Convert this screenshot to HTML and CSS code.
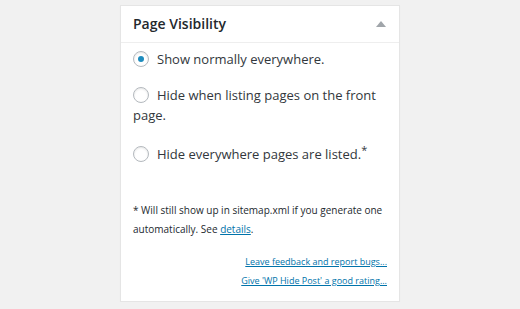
FILE: index.html
```html
<!DOCTYPE html>
<html>
<head>
<meta charset="utf-8">
<link rel="stylesheet" href="styles.css">
</head>
<body>
<div class="box">
  <div class="box-header">
    <h2 class="box-title">Page Visibility</h2>
    <span class="toggle"></span>
  </div>
  <div class="box-body">
    <label class="option option-first"><span class="radio checked"></span><span>Show normally everywhere.</span></label>
    <label class="option option-wrap"><span class="radio"></span>Hide when listing pages on the front page.</label>
    <label class="option option-last"><span class="radio"></span><span>Hide everywhere pages are listed.<sup class="star">*</sup></span></label>
    <p class="note">* Will still show up in sitemap.xml if you generate one automatically. See <a href="#">details</a>.</p>
    <div class="links">
      <a href="#">Leave feedback and report bugs...</a>
      <a href="#">Give 'WP Hide Post' a good rating...</a>
    </div>
  </div>
</div>
</body>
</html>
```
FILE: styles.css
```css
html, body {
  margin: 0;
  padding: 0;
  background: #f1f1f1;
  font-family: "Open Sans", "Liberation Sans", sans-serif;
  color: #444;
}
.box {
  margin: 5px 0 0 120px;
  width: 280px;
  height: 297px;
  background: #fff;
  border: 1px solid #e5e5e5;
  box-shadow: 0 1px 1px rgba(0,0,0,0.04);
  box-sizing: border-box;
}
.box-header {
  height: 36px;
  border-bottom: 1px solid #eee;
  display: flex;
  align-items: center;
  justify-content: space-between;
  padding: 0 13px 0 12px;
}
.box-title {
  margin: -1px 0 0 0;
  font-size: 14px;
  font-weight: 600;
  color: #23282d;
}
.toggle {
  width: 0;
  height: 0;
  border-left: 5px solid transparent;
  border-right: 5px solid transparent;
  border-bottom: 6px solid #a0a5aa;
}
.box-body {
  padding: 6px 12px 0 12px;
}
.option {
  display: flex;
  align-items: flex-start;
  font-size: 13px;
  line-height: 20px;
  color: #32373c;
}
.option-first { margin-bottom: 16px; }
.option-wrap {
  display: block;
  margin-bottom: 19px;
}
.radio {
  flex: none;
  width: 14px;
  height: 14px;
  margin: 2px 8px 0 0;
  border: 1px solid #b4b9be;
  border-radius: 50%;
  box-shadow: inset 0 1px 2px rgba(0,0,0,0.1);
  display: flex;
  align-items: center;
  justify-content: center;
}
.option-wrap .radio {
  display: inline-flex;
  vertical-align: -3px;
  margin-top: 0;
}
.radio.checked::after {
  content: "";
  width: 6px;
  height: 6px;
  border-radius: 50%;
  background: #1e8cbe;
}
.star {
  font-size: 11px;
  line-height: 0;
}
.note {
  margin: 37px 0 0 0;
  font-size: 10px;
  line-height: 19px;
  color: #23282d;
}
.note a, .links a {
  color: #0073aa;
}
.links {
  margin-top: 13px;
  display: flex;
  flex-direction: column;
  align-items: flex-end;
  font-size: 9px;
  line-height: 19px;
}
```
